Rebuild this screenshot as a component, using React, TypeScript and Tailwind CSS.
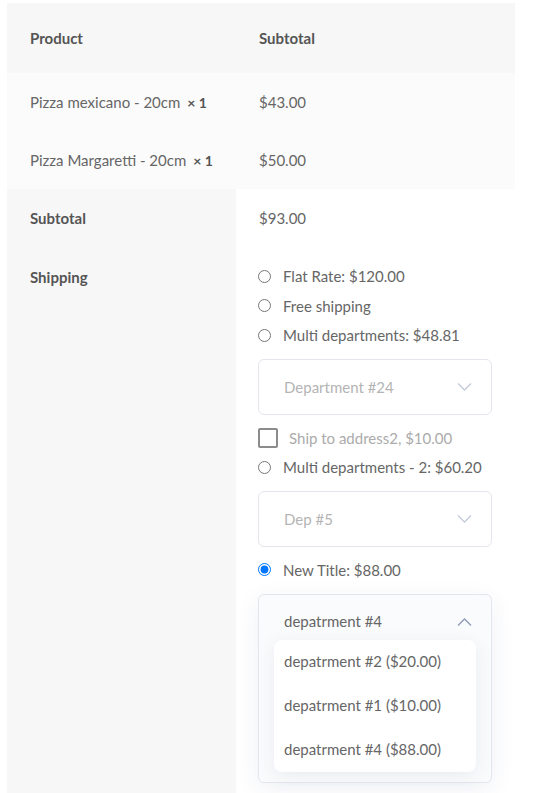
import React from 'react'

const font = { fontFamily: 'Lato, "Open Sans", sans-serif' }

function Chevron({ up = false }: { up?: boolean }) {
  return (
    <svg width="15" height="8" viewBox="0 0 15 8" fill="none">
      <polyline
        points={up ? '1,7.5 7.5,1 14,7.5' : '1,0.5 7.5,7 14,0.5'}
        stroke={up ? '#8e9ab3' : '#c3cad8'}
        strokeWidth="1.3"
      />
    </svg>
  )
}

function Radio({ label, checked = false }: { label: string; checked?: boolean }) {
  return (
    <label className="flex items-center h-[29.5px] gap-3">
      <input
        type="radio"
        name="shipping"
        defaultChecked={checked}
        className="w-[13px] h-[13px] m-0 shrink-0"
      />
      <span className="text-[#666]">{label}</span>
    </label>
  )
}

function SelectBox({ value }: { value: string }) {
  return (
    <div className="mt-[9px] mb-[8px] h-[56px] w-[234px] border border-[#e4e6ee] rounded-md flex items-center justify-between pl-[25px] pr-[19px]">
      <span className="text-[#b4b4b4]">{value}</span>
      <Chevron />
    </div>
  )
}

const options = [
  'depatrment #2 ($20.00)',
  'depatrment #1 ($10.00)',
  'depatrment #4 ($88.00)',
]

export default function App() {
  return (
    <div className="bg-white min-h-[793px] pt-[3px] pl-[7px] text-[15px]" style={font}>
      <div className="w-[508px]">
        <div className="flex h-[70px] items-center bg-[#f7f7f7] font-bold text-[#555]">
          <div className="w-[229px] pl-[23px]">Product</div>
          <div className="pl-[23px]">Subtotal</div>
        </div>

        {[
          ['Pizza mexicano - 20cm', '$43.00'],
          ['Pizza Margaretti - 20cm', '$50.00'],
        ].map(([name, price]) => (
          <div key={name} className="flex h-[58px] items-center bg-[#fbfbfb] text-[#666]">
            <div className="w-[229px] pl-[23px]">
              {name}
              <strong className="ml-[7px] text-[#555] text-[14px]">× 1</strong>
            </div>
            <div className="pl-[23px]">{price}</div>
          </div>
        ))}

        <div className="flex h-[58px]">
          <div className="w-[229px] pl-[23px] bg-[#f7f7f7] flex items-center font-bold text-[#555]">
            Subtotal
          </div>
          <div className="pl-[23px] flex items-center text-[#666]">$93.00</div>
        </div>

        <div className="flex">
          <div className="w-[229px] shrink-0 pl-[23px] pt-[15px] bg-[#f7f7f7] font-bold text-[#555]">
            <div className="h-[29.5px] flex items-center">Shipping</div>
          </div>
          <div className="pl-[22px] pt-[14.5px] pb-[20px]">
            <Radio label="Flat Rate: $120.00" />
            <Radio label="Free shipping" />
            <Radio label="Multi departments: $48.81" />
            <SelectBox value="Department #24" />

            <label className="flex items-center h-[29.5px] gap-[11px]">
              <span className="w-[20px] h-[20px] border-2 border-[#8c8c8c] rounded-[2px] shrink-0" />
              <span className="text-[#ababab]">Ship to address2, $10.00</span>
            </label>
            <Radio label="Multi departments - 2: $60.20" />
            <SelectBox value="Dep #5" />
            <Radio label="New Title: $88.00" checked />

            <div className="mt-[9px] w-[234px] h-[189px] border border-[#e4e6ee] rounded-md bg-[#fafbfc] shadow-[0_6px_24px_rgba(40,60,120,0.07)] relative">
              <div className="h-[54px] flex items-center justify-between pl-[25px] pr-[19px]">
                <span className="text-[#666]">depatrment #4</span>
                <Chevron up />
              </div>
              <div className="absolute left-[15px] right-[15px] top-[45px] bg-white rounded-lg shadow-[0_4px_18px_rgba(40,60,120,0.08)] py-0">
                {options.map((o) => (
                  <div key={o} className="h-[44px] flex items-center pl-[10px] text-[#666]">
                    {o}
                  </div>
                ))}
              </div>
            </div>
          </div>
        </div>
      </div>
    </div>
  )
}
